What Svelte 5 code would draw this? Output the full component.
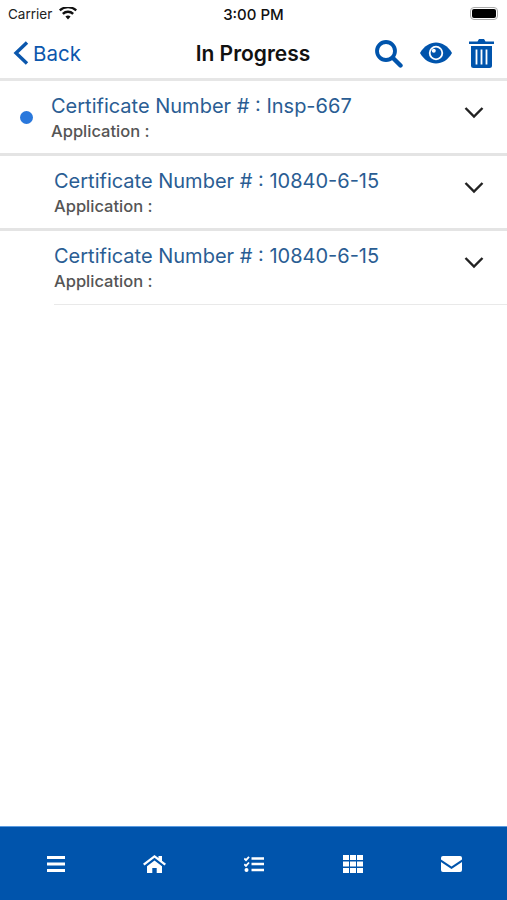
<script>
  const rows = [
    { title: 'Certificate Number # : Insp-667', dot: true },
    { title: 'Certificate Number # : 10840-6-15', dot: false },
    { title: 'Certificate Number # : 10840-6-15', dot: false, last: true }
  ];
</script>

<div class="screen">
  <div class="status">
    <div class="carrier">
      <span>Carrier</span>
      <svg width="18" height="13" viewBox="0 0 18 13"><path d="M9 12.600 6.400 9.600a3.800 3.800 0 0 1 5.200 0ZM4.700 7.800 3 5.900a8.800 8.800 0 0 1 12 0l-1.700 1.900a6.300 6.300 0 0 0-8.600 0ZM1.500 4.300 0 2.600a13.400 13.400 0 0 1 18 0l-1.500 1.700a11 11 0 0 0-15 0Z" fill="#111"/></svg>
    </div>
    <div class="time">3:00 PM</div>
    <div class="battery"><i></i></div>
  </div>

  <header class="nav">
    <div class="back">
      <svg width="18" height="26" viewBox="0 0 18 26"><path d="M15 2.500 4 13l11 10.500" fill="none" stroke="#0b57ad" stroke-width="3.400"/></svg>
      <span>Back</span>
    </div>
    <h1>In Progress</h1>
    <div class="actions">
      <svg width="29" height="29" viewBox="0 0 29 29"><circle cx="12" cy="12" r="9" fill="none" stroke="#0054ac" stroke-width="3.800"/><path d="m19 19 7.500 7.500" stroke="#0054ac" stroke-width="4.400" stroke-linecap="round"/></svg>
      <svg width="32" height="22" viewBox="0 0 32 22"><path d="M0 11C4 4 10 .5 16 .5S28 4 32 11c-4 7-10 10.500-16 10.500S4 18 0 11Z" fill="#0054ac"/><circle cx="16" cy="11" r="7.200" fill="#fff"/><circle cx="16" cy="11" r="5.400" fill="#0054ac"/><circle cx="13.800" cy="8.800" r="2" fill="#fff"/></svg>
      <svg width="25" height="30" viewBox="0 0 25 30"><path d="M0 3.500h8.500L10 1h5l1.500 2.500H25V6H0Z" fill="#0054ac"/><path d="M2 8h21v19.500a2.500 2.500 0 0 1-2.500 2.500h-16A2.500 2.500 0 0 1 2 27.500Z" fill="#0054ac"/><path d="M7.500 11.500v15M12.500 11.500v15M17.500 11.500v15" stroke="#fff" stroke-width="1.800"/></svg>
    </div>
  </header>

  <main class="list">
    {#each rows as row}
      <section class="row" class:first={row.dot} class:last={row.last}>
        {#if row.dot}<span class="dot"></span>{/if}
        <div class="text">
          <div class="title">{row.title}</div>
          <div class="sub">Application :</div>
        </div>
        <svg class="chev" width="20" height="13" viewBox="0 0 20 13"><path d="M1.500 2 10 10.500 18.500 2" fill="none" stroke="#222" stroke-width="2.400"/></svg>
      </section>
    {/each}
  </main>

  <footer class="tabs">
    <svg width="18" height="16" viewBox="0 0 18 16"><path d="M0 1.500h18M0 8h18M0 14.500h18" stroke="#fff" stroke-width="2.800"/></svg>
    <svg width="23" height="18" viewBox="0 0 23 18"><path d="M0 8.800 11.500 0 15.500 3V1h3.500v4.700l4 3.100-1.500 1.700-10-7.700-10 7.700Z" fill="#fff"/><path d="M4 11.300 11.500 5.400 19 11.300V18h-5.300v-5H9.300v5H4Z" fill="#fff"/></svg>
    <svg width="20" height="16" viewBox="0 0 20 16"><path d="m.3 2.500 1.700 1.700L5 .8M.3 8.200 2 9.900l3-3.400" fill="none" stroke="#fff" stroke-width="1.800"/><circle cx="2.500" cy="14" r="2" fill="#fff"/><path d="M7.500 2.500H20M7.500 8H20M7.500 14H20" stroke="#fff" stroke-width="2.400"/></svg>
    <svg width="20" height="18" viewBox="0 0 20 18"><path d="M0 0h6v5H0ZM7 0h6v5H7ZM14 0h6v5h-6ZM0 6.500h6v5H0ZM7 6.500h6v5H7ZM14 6.500h6v5h-6ZM0 13h6v5H0ZM7 13h6v5H7ZM14 13h6v5h-6Z" fill="#fff"/></svg>
    <svg width="21" height="16" viewBox="0 0 21 16"><path d="M2 0h17a2 2 0 0 1 2 2v1.500l-10.500 7L0 3.500V2a2 2 0 0 1 2-2Z" fill="#fff"/><path d="M0 6l10.500 7L21 6v8a2 2 0 0 1-2 2H2a2 2 0 0 1-2-2Z" fill="#fff"/></svg>
  </footer>
</div>

<style>
  :global(body) { margin: 0; background: #fff; }
  .screen {
    width: 507px; height: 900px; display: flex; flex-direction: column;
    font-family: Inter, "Liberation Sans", Arial, sans-serif; background: #fff; overflow: hidden;
  }
  .status {
    height: 28px; flex: none; display: grid; grid-template-columns: 1fr auto 1fr; align-items: center;
    padding: 0 8px; font-size: 13.500px; color: #222;
  }
  .carrier { display: flex; align-items: center; gap: 7px; }
  .carrier svg { margin-top: -2px; }
  .time { font-size: 15px; font-weight: 500; color: #111; }
  .battery {
    justify-self: end; width: 28px; height: 13px; border: 1px solid #aaa; border-radius: 4px;
    padding: 1px; box-sizing: border-box; margin-right: 1px; margin-top: -1px;
  }
  .battery i { display: block; height: 100%; background: #000; border-radius: 2px; }
  .nav {
    height: 50px; flex: none; display: grid; grid-template-columns: 1fr auto 1fr; align-items: center;
    padding: 0 13px 0 12px; border-bottom: 3px solid #e6e6e6; box-sizing: content-box;
  }
  .back { display: flex; align-items: center; gap: 3px; color: #0b57ad; font-size: 20.500px; }
  h1 { margin: 0; font-size: 21px; font-weight: 600; color: #111; }
  .actions { justify-self: end; display: flex; align-items: center; gap: 17px; }
  .list { flex: 1; }
  .row {
    height: 72px; position: relative; display: flex; align-items: flex-start;
    padding-left: 54px; border-bottom: 3px solid #e4e4e4;
  }
  .row.first { padding-left: 51px; }
  .row.last { border-bottom: 0; }
  .row.last .text { border-bottom: 1px solid #e9e9e9; height: 74px; margin-right: -43px; }
  .text { flex: 1; padding-top: 13px; box-sizing: border-box; }
  .title { font-size: 20px; line-height: 24px; color: #2a5d93; }
  .sub { font-size: 16.500px; line-height: 20px; margin-top: 3px; color: #555; font-weight: 500; }
  .dot {
    position: absolute; left: 20px; top: 30px; width: 13px; height: 13px;
    border-radius: 50%; background: #2a78dc;
  }
  .chev { flex: none; margin: 25px 23px 0 0; }
  .tabs {
    height: 73px; flex: none; background: #0054ac; border-top: 1px solid #5b9be0;
    display: grid; grid-template-columns: repeat(5, 99px); justify-content: center; justify-items: center;
    align-items: center; padding: 0 6px; box-sizing: content-box;
  }
</style>
